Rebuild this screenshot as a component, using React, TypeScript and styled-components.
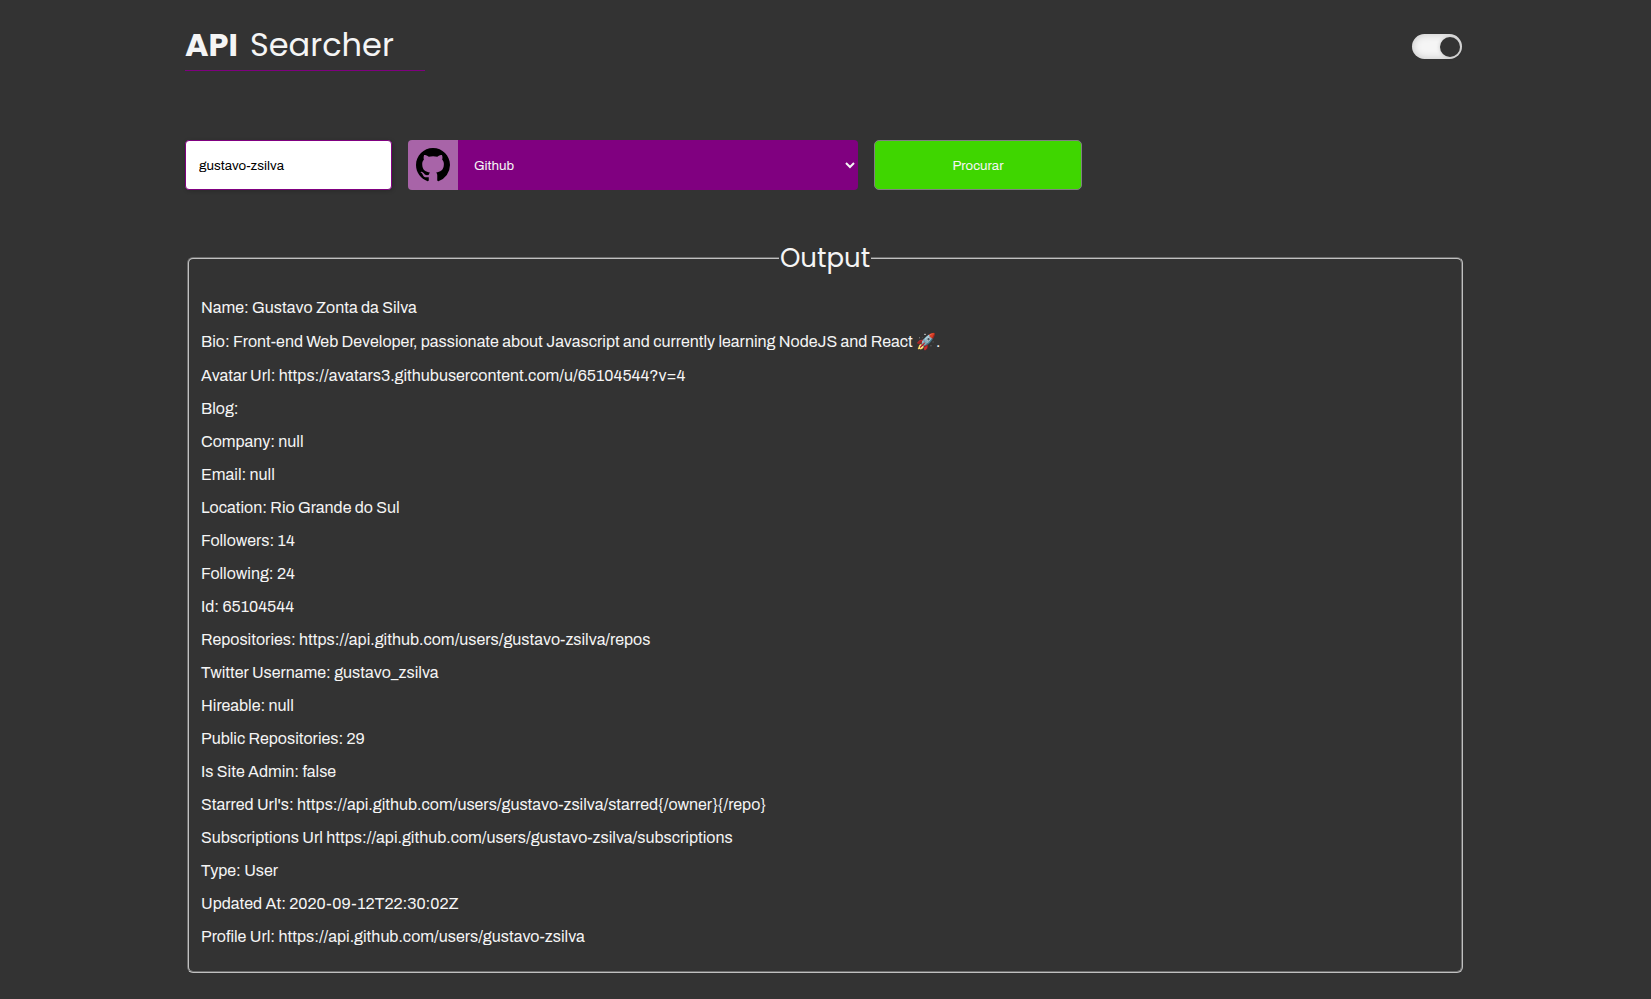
import React, { useState } from 'react';
import styled, { createGlobalStyle } from 'styled-components';

const GlobalStyle = createGlobalStyle`
  * {
    box-sizing: border-box;
    margin: 0;
    padding: 0;
  }
  body {
    padding-right: 1px;
    background: #333;
    color: #f5f5f5;
    font-family: Archivo, "Liberation Sans", sans-serif;
  }
  input, select, button {
    font-family: inherit;
  }
`;

const Page = styled.main`
  width: 100%;
  max-width: 1280px;
  margin: 0 auto;
  padding: 22px 0;
`;

const Header = styled.header`
  display: flex;
  justify-content: space-between;
  align-items: center;
  padding-right: 3px;
`;

const Title = styled.h1`
  display: flex;
  gap: 12px;
  width: 240px;
  padding-bottom: 2px;
  border-bottom: 1px solid purple;
  font: 400 32px/46px Poppins, "Noto Sans", sans-serif;
`;

const Brand = styled.strong`
  font-weight: 700;
`;

const Toggle = styled.input`
  appearance: none;
  display: flex;
  align-items: center;
  width: 50px;
  height: 25px;
  padding: 0 2px;
  border-radius: 13px;
  background: #f5f5f5;
  box-shadow: inset 0 0 8px rgba(0, 0, 0, 0.2);
  cursor: pointer;

  &::before {
    content: "";
    width: 20px;
    height: 20px;
    border-radius: 50%;
    background: #333;
    box-shadow: 0 0 4px rgba(0, 0, 0, 0.2);
  }
  &:checked {
    justify-content: flex-end;
  }
`;

const SearchForm = styled.form`
  display: flex;
  flex-wrap: wrap;
  gap: 16px;
  margin-top: 69px;
`;

const UserInput = styled.input`
  width: 207px;
  height: 50px;
  padding: 0 13px;
  border: 1px solid purple;
  border-radius: 4px;
  background: #fff;
  color: #000;
  box-shadow: 1px 1px 4px rgba(0, 0, 0, 0.2);
`;

const ApiPicker = styled.div`
  display: flex;
  width: 450px;
  height: 50px;
  border-radius: 4px;
  overflow: hidden;
`;

const ApiIcon = styled.span`
  display: flex;
  align-items: center;
  justify-content: center;
  width: 50px;
  background: #a864a8;
  color: #000;
`;

const ApiSelect = styled.select`
  flex: 1;
  padding: 0 12px;
  border: 0;
  background: purple;
  color: #f5f5f5;
`;

const SearchButton = styled.button`
  width: 208px;
  height: 50px;
  border: 1px solid #808080;
  border-radius: 5px;
  background: #3fd600;
  color: #f5f5f5;
  cursor: pointer;
`;

const Output = styled.fieldset`
  margin: 49px 2px 0;
  padding: 22px 12px 26px;
  border: 2px groove #c0c0c0;
  border-radius: 6px;
`;

const OutputTitle = styled.legend`
  margin: 0 auto;
  padding: 0 1px;
  font: 400 26px/38px Poppins, "Noto Sans", sans-serif;
`;

const Lines = styled.div`
  display: flex;
  flex-direction: column;
  gap: 16px;
  font-size: 16px;
  overflow-wrap: anywhere;
`;

const profile = [
  'Name: Gustavo Zonta da Silva',
  'Bio: Front-end Web Developer, passionate about Javascript and currently learning NodeJS and React 🚀.',
  'Avatar Url: https://avatars3.githubusercontent.com/u/65104544?v=4',
  'Blog:',
  'Company: null',
  'Email: null',
  'Location: Rio Grande do Sul',
  'Followers: 14',
  'Following: 24',
  'Id: 65104544',
  'Repositories: https://api.github.com/users/gustavo-zsilva/repos',
  'Twitter Username: gustavo_zsilva',
  'Hireable: null',
  'Public Repositories: 29',
  'Is Site Admin: false',
  "Starred Url's: https://api.github.com/users/gustavo-zsilva/starred{/owner}{/repo}",
  'Subscriptions Url https://api.github.com/users/gustavo-zsilva/subscriptions',
  'Type: User',
  'Updated At: 2020-09-12T22:30:02Z',
  'Profile Url: https://api.github.com/users/gustavo-zsilva',
];

function GithubMark() {
  return (
    <svg width="34" height="34" viewBox="0 0 16 16" fill="currentColor" aria-hidden="true">
      <path
        fillRule="evenodd"
        d="M8 0C3.58 0 0 3.58 0 8c0 3.54 2.29 6.53 5.47 7.59.4.07.55-.17.55-.38 0-.19-.01-.82-.01-1.49-2.01.37-2.53-.49-2.69-.94-.09-.23-.48-.94-.82-1.13-.28-.15-.68-.52-.01-.53.63-.01 1.08.58 1.23.82.72 1.21 1.87.87 2.33.66.07-.52.28-.87.51-1.07-1.78-.2-3.64-.89-3.64-3.95 0-.87.31-1.59.82-2.15-.08-.2-.36-1.02.08-2.12 0 0 .67-.21 2.2.82.64-.18 1.32-.27 2-.27.68 0 1.36.09 2 .27 1.53-1.04 2.2-.82 2.2-.82.44 1.1.16 1.92.08 2.12.51.56.82 1.27.82 2.15 0 3.07-1.87 3.75-3.65 3.95.29.25.54.73.54 1.48 0 1.07-.01 1.93-.01 2.2 0 .21.15.46.55.38A8.013 8.013 0 0 0 16 8c0-4.42-3.58-8-8-8z"
      />
    </svg>
  );
}

export default function App() {
  const [dark, setDark] = useState(true);
  const [user, setUser] = useState('gustavo-zsilva');

  return (
    <>
      <GlobalStyle />
      <Page>
        <Header>
          <Title>
            <Brand>API</Brand> <span>Searcher</span>
          </Title>
          <Toggle
            type="checkbox"
            role="switch"
            aria-label="Dark theme"
            checked={dark}
            onChange={(e) => setDark(e.target.checked)}
          />
        </Header>
        <SearchForm onSubmit={(e) => e.preventDefault()}>
          <UserInput
            type="text"
            aria-label="Username"
            value={user}
            onChange={(e) => setUser(e.target.value)}
          />
          <ApiPicker>
            <ApiIcon>
              <GithubMark />
            </ApiIcon>
            <ApiSelect aria-label="API">
              <option>Github</option>
            </ApiSelect>
          </ApiPicker>
          <SearchButton type="submit">Procurar</SearchButton>
        </SearchForm>
        <Output>
          <OutputTitle>Output</OutputTitle>
          <Lines>
            {profile.map((line) => (
              <p key={line}>{line}</p>
            ))}
          </Lines>
        </Output>
      </Page>
    </>
  );
}
